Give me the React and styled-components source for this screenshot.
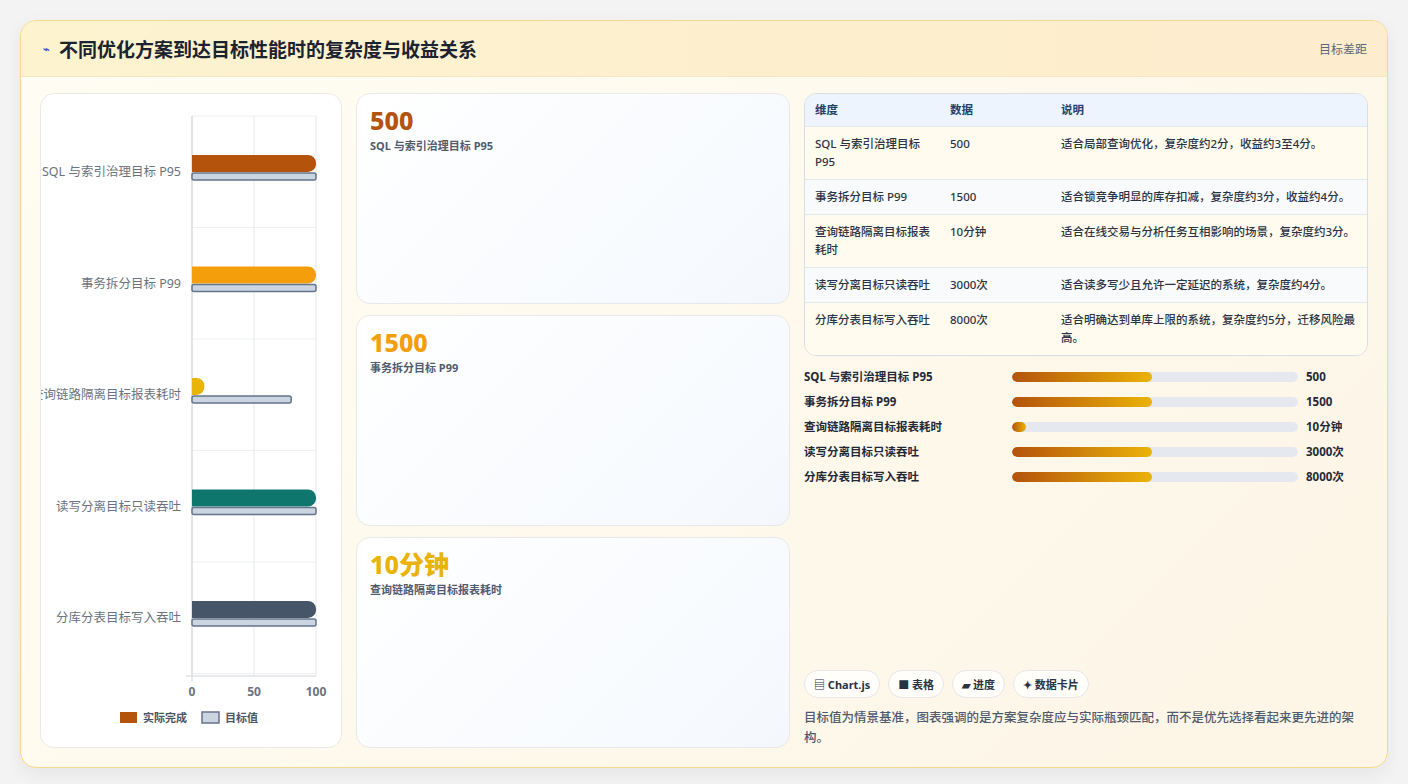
import React from "react";
import styled, { createGlobalStyle } from "styled-components";

const Global = createGlobalStyle`
  body { margin: 0; background: #f3f3f3; font-family: "Noto Sans", "Noto Sans CJK SC", sans-serif; }
`;

const Page = styled.div`
  padding: 20px 20px 18px 20px;
  height: 784px;
  box-sizing: border-box;
`;

const Card = styled.div`
  height: 100%;
  border: 1px solid #f5d98a;
  border-radius: 16px;
  background: linear-gradient(135deg, #fffdf3, #fdf5e6);
  box-shadow: 0 6px 18px rgba(0,0,0,0.06);
  display: flex;
  flex-direction: column;
  overflow: hidden;
`;

const Header = styled.div`
  height: 55px;
  flex: none;
  display: flex;
  align-items: center;
  justify-content: space-between;
  padding: 0 20px 0 22px;
  background: linear-gradient(90deg, #fdf3cf, #fdeccd);
  border-bottom: 1px solid #f3e6c4;
`;

const Title = styled.h1`
  margin: 0;
  font-size: 19px;
  font-weight: 700;
  color: #1b2230;
  display: flex;
  align-items: center;
  gap: 9px;
`;

const Tag = styled.span`
  font-size: 12px;
  color: #5c6677;
`;

const Body = styled.div`
  flex: 1;
  display: grid;
  grid-template-columns: 302px 434px 1fr;
  gap: 14px;
  padding: 16px 19px 19px 19px;
  min-height: 0;
`;

const Panel = styled.div`
  background: #fff;
  border: 1px solid #eceae4;
  border-radius: 14px;
  display: flex;
  flex-direction: column;
  align-items: center;
  overflow: hidden;
`;

const Cards = styled.div`
  display: grid;
  grid-template-rows: 1fr 1fr 1fr;
  gap: 11px;
`;

const Stat = styled.div`
  background: linear-gradient(135deg, #ffffff, #f4f8fd);
  border: 1px solid #e7e8ea;
  border-radius: 14px;
  padding: 9px 13px;
`;

const StatValue = styled.div`
  font-size: 25px;
  font-weight: 800;
  color: ${p => p.color};
  line-height: 34px;
`;

const StatLabel = styled.div`
  font-size: 11px;
  font-weight: 700;
  color: #4f5b6d;
`;

const Right = styled.div`
  display: flex;
  flex-direction: column;
  min-width: 0;
`;

const Table = styled.div`
  border: 1px solid #d8dee8;
  border-radius: 12px;
  overflow: hidden;
  font-size: 11.5px;
  color: #2a3343;
`;

const Row = styled.div`
  display: grid;
  grid-template-columns: 125px 101px 1fr;
  column-gap: 10px;
  padding: ${p => (p.head ? "7px 10px" : "8px 10px")};
  line-height: 18px;
  background: ${p => (p.head ? "#edf4fd" : p.alt ? "#f9fafb" : "#fffbee")};
  font-weight: ${p => (p.head ? 700 : 500)};
  color: ${p => (p.head ? "#26406e" : "#2a3343")};
  border-top: ${p => (p.head ? "none" : "1px solid #e3e7ee")};
  & > span:nth-child(2) { margin-left: 0; }
`;

const Bars = styled.div`
  display: flex;
  flex-direction: column;
  gap: 7px;
  margin-top: 12px;
`;

const BarRow = styled.div`
  display: grid;
  grid-template-columns: 200px 286px 1fr;
  align-items: center;
  gap: 0 8px;
  font-size: 11.5px;
  font-weight: 700;
  color: #1f2937;
  line-height: 18px;
`;

const Track = styled.div`
  height: 10px;
  border-radius: 5px;
  background: #e5e9ef;
  overflow: hidden;
`;

const Fill = styled.div`
  height: 100%;
  border-radius: 5px;
  background: linear-gradient(90deg, #b4530c, #eab308);
`;

const Chips = styled.div`
  margin-top: auto;
  display: flex;
  gap: 8px;
`;

const Chip = styled.span`
  font-size: 11px;
  font-weight: 700;
  color: #2a3343;
  border: 1px solid #e6e6e6;
  background: #fffefb;
  border-radius: 15px;
  padding: 5px 9px;
`;

const Note = styled.p`
  margin: 10px 0 0 0;
  font-size: 12.5px;
  line-height: 20px;
  color: #4f5b6d;
  font-weight: 500;
`;

const rows = [
  ["SQL 与索引治理目标 P95", "500", "适合局部查询优化，复杂度约2分，收益约3至4分。", 100, "#b4530c"],
  ["事务拆分目标 P99", "1500", "适合锁竞争明显的库存扣减，复杂度约3分，收益约4分。", 100, "#f59e0b"],
  ["查询链路隔离目标报表耗时", "10分钟", "适合在线交易与分析任务互相影响的场景，复杂度约3分。", 10, "#eab308"],
  ["读写分离目标只读吞吐", "3000次", "适合读多写少且允许一定延迟的系统，复杂度约4分。", 100, "#0f766e"],
  ["分库分表目标写入吞吐", "8000次", "适合明确达到单库上限的系统，复杂度约5分，迁移风险最高。", 100, "#475569"],
];
const targets = [100, 100, 80, 100, 100];
const progress = [49, 49, 5, 49, 49];

function Chart() {
  const x0 = 151, w = 124;
  return (
    <svg width="300" height="652" viewBox="0 0 300 652">
      {[0, 50, 100].map(v => (
        <line key={v} x1={x0 + w * v / 100} x2={x0 + w * v / 100} y1="22" y2="582" stroke="#e5e7eb" />
      ))}
      {[0, 1, 2, 3, 4, 5].map(i => (
        <line key={i} x1={x0} x2={x0 + w} y1={22 + i * 111.5} y2={22 + i * 111.5} stroke="#eef0f2" />
      ))}
      <line x1={x0 - 6} x2={x0 + w} y1="582" y2="582" stroke="#d1d5db" />
      <line x1={x0} x2={x0} y1="22" y2="588" stroke="#d1d5db" />
      {rows.map((r, i) => {
        const cy = 78 + i * 111.5;
        const bw = w * r[3] / 100;
        return (
          <g key={i}>
            <text x={x0 - 11} y={cy + 4} textAnchor="end" fontSize="12.5" fill="#6b7280">{r[0]}</text>
            <path d={`M${x0} ${cy - 17} H${x0 + bw - 8} A8 8 0 0 1 ${x0 + bw} ${cy - 9} A8 8 0 0 1 ${x0 + bw - 8} ${cy} H${x0} Z`} fill={r[4]} />
            <rect x={x0} y={cy + 1} width={w * targets[i] / 100} height="7" rx="2" fill="#cbd5e1" stroke="#64748b" strokeWidth="1.5" />
          </g>
        );
      })}
      {[0, 50, 100].map(v => (
        <text key={v} x={x0 + w * v / 100} y="602" textAnchor="middle" fontSize="12" fontWeight="700" fill="#6b7280">{v}</text>
      ))}
      <rect x="79" y="618" width="17" height="11" fill="#b4530c" />
      <text x="102" y="628" fontSize="11" fontWeight="700" fill="#4b5563">实际完成</text>
      <rect x="161" y="618" width="17" height="11" fill="#cbd5e1" stroke="#64748b" strokeWidth="1.5" />
      <text x="184" y="628" fontSize="11" fontWeight="700" fill="#4b5563">目标值</text>
    </svg>
  );
}

export default function App() {
  return (
    <Page>
      <Global />
      <Card>
        <Header>
          <Title><span style={{ fontSize: 11, color: "#3b5bdb" }}>⌁</span>不同优化方案到达目标性能时的复杂度与收益关系</Title>
          <Tag>目标差距</Tag>
        </Header>
        <Body>
          <Panel><Chart /></Panel>
          <Cards>
            <Stat><StatValue color="#b4530c">500</StatValue><StatLabel>SQL 与索引治理目标 P95</StatLabel></Stat>
            <Stat><StatValue color="#f59e0b">1500</StatValue><StatLabel>事务拆分目标 P99</StatLabel></Stat>
            <Stat><StatValue color="#eab308">10分钟</StatValue><StatLabel>查询链路隔离目标报表耗时</StatLabel></Stat>
          </Cards>
          <Right>
            <Table>
              <Row head><span>维度</span><span>数据</span><span>说明</span></Row>
              {rows.map((r, i) => (
                <Row key={i} alt={i % 2 === 1}><span>{r[0]}</span><span>{r[1]}</span><span>{r[2]}</span></Row>
              ))}
            </Table>
            <Bars>
              {rows.map((r, i) => (
                <BarRow key={i}>
                  <span>{r[0]}</span>
                  <Track><Fill style={{ width: progress[i] + "%" }} /></Track>
                  <span>{r[1]}</span>
                </BarRow>
              ))}
            </Bars>
            <Chips>
              <Chip>▤ Chart.js</Chip>
              <Chip>■ 表格</Chip>
              <Chip>▰ 进度</Chip>
              <Chip>✦ 数据卡片</Chip>
            </Chips>
            <Note>目标值为情景基准，图表强调的是方案复杂度应与实际瓶颈匹配，而不是优先选择看起来更先进的架构。</Note>
          </Right>
        </Body>
      </Card>
    </Page>
  );
}
